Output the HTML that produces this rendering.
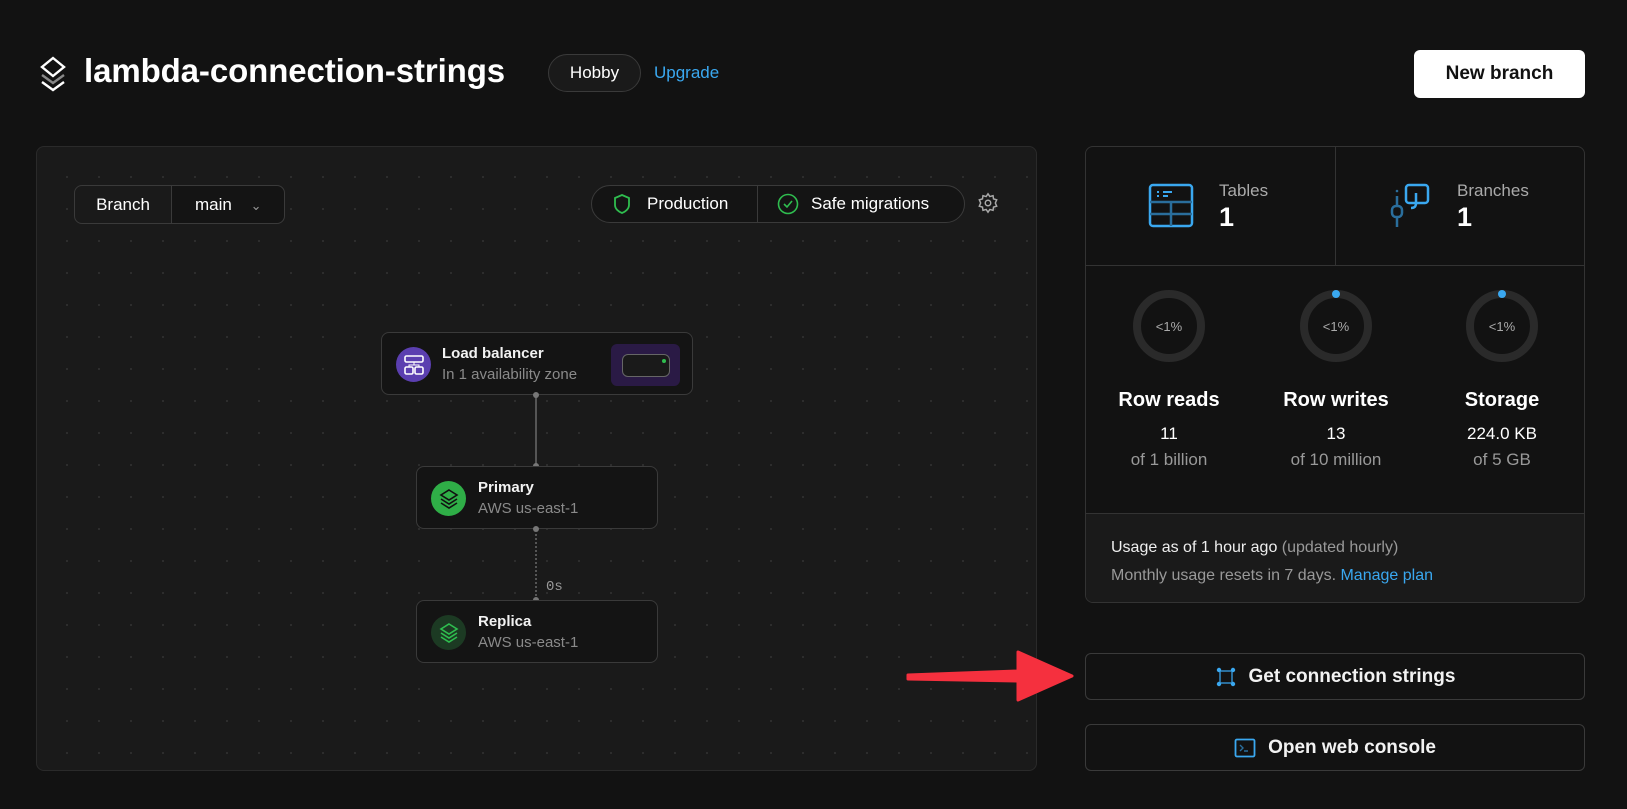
<!DOCTYPE html>
<html><head><meta charset="utf-8"><style>
*{box-sizing:border-box;margin:0;padding:0}
body{width:1627px;height:809px;background:#121212;font-family:"Liberation Sans",sans-serif;color:#fff;position:relative;overflow:hidden}
.a{position:absolute}
.canvas{left:36px;top:146px;width:1001px;height:625px;background:#1a1a1a;border:1px solid #2a2a2a;border-radius:8px;
background-image:radial-gradient(circle,#333 0.8px,transparent 1px);background-size:32px 32px;background-position:14px 14px}
.pill{border:1px solid #3a3a3a;background:#141414;display:flex;align-items:center}
.node{background:#141414;border:1px solid #3a3a3a;border-radius:8px}
.nt{font-size:15px;font-weight:bold;color:#f2f2f2}
.ns{font-size:15px;color:#8a8a8a;margin-top:4px}
.card{left:1085px;top:146px;width:500px;height:457px;border:1px solid #333;border-radius:8px;background:#121212;overflow:hidden}
.btn{left:1085px;width:500px;height:47px;border:1px solid #3a3a3a;border-radius:6px;background:#121212;display:flex;align-items:center;justify-content:center;font-size:19px;font-weight:bold;color:#f2f2f2}
.lbl{width:160px;text-align:center}
.dot{width:6px;height:6px;border-radius:50%;background:#777}
</style></head><body>
<svg class="a" style="left:38px;top:56px" width="30" height="36" viewBox="0 0 30 36" fill="none" stroke-width="2.4">
<path d="M15 2 L26 11 L15 20 L4 11 Z" stroke="#fff"/>
<path d="M4 19 L15 27 L26 19" stroke="#888"/>
<path d="M4 26 L15 34 L26 26" stroke="#fff"/>
</svg>
<div class="a" style="left:84px;top:52px;font-size:33px;font-weight:bold;letter-spacing:-0.1px">lambda-connection-strings</div>
<div class="a pill" style="left:548px;top:54px;width:93px;height:38px;border-radius:19px;justify-content:center;font-size:17px;background:#1a1a1a">Hobby</div>
<div class="a" style="left:654px;top:63px;font-size:17px;color:#3aa8f0">Upgrade</div>
<div class="a" style="left:1414px;top:50px;width:171px;height:48px;background:#fff;border-radius:6px;color:#111;font-size:19px;font-weight:bold;display:flex;align-items:center;justify-content:center">New branch</div>

<div class="a canvas"></div>
<div class="a pill" style="left:74px;top:185px;width:211px;height:39px;border-radius:8px;font-size:17px;background:#1a1a1a">
<div style="width:97px;text-align:center;border-right:1px solid #3a3a3a;line-height:37px">Branch</div>
<div style="flex:1;padding-left:23px;background:#141414;height:100%;line-height:37px;border-radius:0 8px 8px 0">main <span style="color:#999;margin-left:14px;font-size:13px">&#8964;</span></div>
</div>
<div class="a pill" style="left:591px;top:185px;width:374px;height:38px;border-radius:19px;font-size:17px">
<div style="width:166px;display:flex;align-items:center;border-right:1px solid #3a3a3a;height:100%;padding-left:21px">
<svg width="18" height="22" viewBox="0 0 18 22" fill="none" stroke="#2fbd4f" stroke-width="1.8"><path d="M9 2 L16 5 V12 C16 16 12 19 9 20 C6 19 2 16 2 12 V5 Z"/></svg>
<span style="margin-left:16px">Production</span></div>
<div style="display:flex;align-items:center;padding-left:19px">
<svg width="22" height="22" viewBox="0 0 22 22" fill="none" stroke="#2fbd4f" stroke-width="1.6"><circle cx="11" cy="11" r="9.5"/><path d="M7 11 L10 14 L15 8"/></svg>
<span style="margin-left:12px">Safe migrations</span></div>
</div>
<svg class="a" style="left:977px;top:192px" width="22" height="22" viewBox="0 0 24 24" fill="none" stroke="#aaa" stroke-width="1.6"><circle cx="12" cy="12" r="3"/><path d="M12 2l2 3 3.5-1 .5 3.5 3.5 1-1.5 3.5 1.5 3.5-3.5 1-.5 3.5-3.5-1-2 3-2-3-3.5 1-.5-3.5-3.5-1 1.5-3.5L2.5 8.5l3.5-1L6.5 4 10 5z"/></svg>

<div class="a" style="left:535px;top:395px;width:2px;height:71px;background:#555"></div>
<div class="a" style="left:535px;top:529px;width:0;height:71px;border-left:2px dotted #555"></div>
<div class="a" style="left:546px;top:579px;font-family:'Liberation Mono',monospace;font-size:14px;color:#999">0s</div>

<div class="a node" style="left:381px;top:332px;width:312px;height:63px">
<div class="a" style="left:14px;top:14px;width:35px;height:35px;border-radius:50%;background:#5b3fb0"></div>
<svg class="a" style="left:21px;top:21px" width="22" height="22" viewBox="0 0 22 22" fill="none" stroke="#fff" stroke-width="1.6"><rect x="2" y="2" width="18" height="6" rx="1.5"/><rect x="2" y="13" width="8" height="7" rx="1.5"/><rect x="12" y="13" width="8" height="7" rx="1.5"/><path d="M11 8v3M6 13v-2h10v2" stroke-width="1"/></svg>
<div class="a" style="left:60px;top:12px"><div class="nt">Load balancer</div><div class="ns">In 1 availability zone</div></div>
<div class="a" style="left:229px;top:11px;width:69px;height:42px;background:#2a1a45;border-radius:6px"></div>
<div class="a" style="left:240px;top:21px;width:48px;height:23px;border:1.5px solid #666;border-radius:6px;background:#1a1a1a"></div>
<div class="a" style="left:280px;top:26px;width:4px;height:4px;border-radius:50%;background:#2fbd4f"></div>
</div>
<div class="a dot" style="left:533px;top:392px"></div>
<div class="a dot" style="left:533px;top:463px"></div>
<div class="a node" style="left:416px;top:466px;width:242px;height:63px">
<div class="a" style="left:14px;top:14px;width:35px;height:35px;border-radius:50%;background:#2fae47"></div>
<svg class="a" style="left:21px;top:20px" width="22" height="24" viewBox="0 0 22 24" fill="none" stroke="#111" stroke-width="1.6"><path d="M11 3l8 5-8 5-8-5z"/><path d="M3 12l8 5 8-5M3 16l8 5 8-5"/></svg>
<div class="a" style="left:61px;top:12px"><div class="nt">Primary</div><div class="ns">AWS us-east-1</div></div>
</div>
<div class="a dot" style="left:533px;top:526px"></div>
<div class="a dot" style="left:533px;top:597px"></div>
<div class="a node" style="left:416px;top:600px;width:242px;height:63px">
<div class="a" style="left:14px;top:14px;width:35px;height:35px;border-radius:50%;background:#1c3a23"></div>
<svg class="a" style="left:21px;top:20px" width="22" height="24" viewBox="0 0 22 24" fill="none" stroke="#2fbd4f" stroke-width="1.6"><path d="M11 3l8 5-8 5-8-5z"/><path d="M3 12l8 5 8-5M3 16l8 5 8-5"/></svg>
<div class="a" style="left:61px;top:12px"><div class="nt">Replica</div><div class="ns">AWS us-east-1</div></div>
</div>

<div class="a card">
<div class="a" style="left:249px;top:0;width:1px;height:118px;background:#333"></div>
<div class="a" style="left:0;top:118px;width:500px;height:1px;background:#333"></div>
<div class="a" style="left:0;top:366px;width:500px;height:91px;background:#1a1a1a;border-top:1px solid #333"></div>
<svg class="a" style="left:62px;top:36px" width="46" height="45" viewBox="0 0 46 45" fill="none" stroke="#3aa8f0" stroke-width="2.5"><rect x="2" y="2" width="42" height="41" rx="3"/><path d="M2 19h42M2 31h42M23 19v24" stroke="#2a6e9c"/><path d="M9 9h2M15 9h9M9 13h2M15 13h5" stroke-width="2"/></svg>
<div class="a" style="left:133px;top:34px;font-size:17px;color:#aaa">Tables</div>
<div class="a" style="left:133px;top:55px;font-size:27px;font-weight:bold">1</div>
<svg class="a" style="left:303px;top:36px" width="42" height="46" viewBox="0 0 42 46" fill="none" stroke-width="2.5"><rect x="17" y="2" width="22" height="18" rx="3" stroke="#3aa8f0"/><path d="M27 10v10c0 4-2 5-5 5" stroke="#3aa8f0"/><path d="M8 13v10M8 34v10" stroke="#2a6e9c"/><rect x="3" y="23" width="10" height="11" rx="4" stroke="#2a6e9c"/><circle cx="8" cy="8" r="1.3" fill="#2a6e9c" stroke="none"/></svg>
<div class="a" style="left:371px;top:34px;font-size:17px;color:#aaa">Branches</div>
<div class="a" style="left:371px;top:55px;font-size:27px;font-weight:bold">1</div>

<svg class="a" style="left:0;top:140px" width="500" height="80">
<g fill="none" stroke="#2a2a2a" stroke-width="8"><circle cx="83" cy="39" r="32"/><circle cx="250" cy="39" r="32"/><circle cx="416" cy="39" r="32"/></g>
<circle cx="250" cy="7" r="4" fill="#3aa8f0"/><circle cx="416" cy="7" r="4" fill="#3aa8f0"/>
<g fill="#aaa" font-size="13" text-anchor="middle" font-family="Liberation Sans"><text x="83" y="44">&lt;1%</text><text x="250" y="44">&lt;1%</text><text x="416" y="44">&lt;1%</text></g>
</svg>
<div class="a" style="left:0;top:242px;width:500px;display:flex">
<div class="lbl" style="margin-left:3px"><div style="font-size:20px;font-weight:bold">Row reads</div><div style="font-size:17px;margin-top:12px">11</div><div style="font-size:17px;color:#999;margin-top:6px">of 1 billion</div></div>
<div class="lbl" style="margin-left:7px"><div style="font-size:20px;font-weight:bold">Row writes</div><div style="font-size:17px;margin-top:12px">13</div><div style="font-size:17px;color:#999;margin-top:6px">of 10 million</div></div>
<div class="lbl" style="margin-left:6px"><div style="font-size:20px;font-weight:bold">Storage</div><div style="font-size:17px;margin-top:12px">224.0 KB</div><div style="font-size:17px;color:#999;margin-top:6px">of 5 GB</div></div>
</div>
<div class="a" style="left:25px;top:387px;font-size:16px;line-height:28px;color:#eee">Usage as of 1 hour ago <span style="color:#999">(updated hourly)</span><br><span style="color:#999">Monthly usage resets in 7 days.</span> <span style="color:#3aa8f0">Manage plan</span></div>
</div>

<div class="a btn" style="top:653px">
<svg width="22" height="22" viewBox="0 0 22 22" style="margin-right:12px"><rect x="5" y="5" width="12" height="12" fill="none" stroke="#2a6e9c" stroke-width="2"/><g fill="#3aa8f0"><circle cx="4" cy="4" r="2.2"/><circle cx="18" cy="4" r="2.2"/><circle cx="4" cy="18" r="2.2"/><circle cx="18" cy="18" r="2.2"/></g></svg>Get connection strings</div>
<div class="a btn" style="top:724px">
<svg width="22" height="22" viewBox="0 0 22 22" style="margin-right:12px" fill="none"><rect x="1.5" y="2.5" width="19" height="17" rx="1.5" stroke="#3aa8f0" stroke-width="1.8"/><path d="M6 8l3 3-3 3M10 14h4" stroke="#2a6e9c" stroke-width="1.4"/></svg>Open web console</div>

<svg class="a" style="left:900px;top:640px" width="180" height="80"><path d="M8 35 L118 31 L118 12 L172 36 L118 60 L118 41 L8 39 Z" fill="#f5303e" stroke="#f5303e" stroke-width="3" stroke-linejoin="round"/></svg>
</body></html>
